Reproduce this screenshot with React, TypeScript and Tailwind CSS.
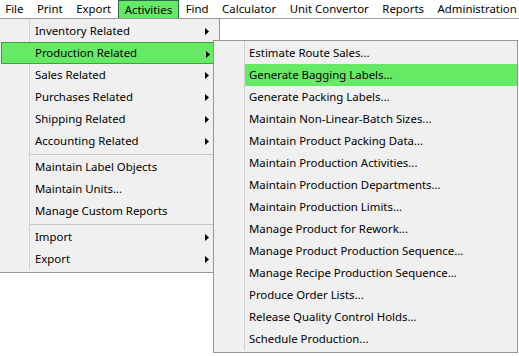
import React from "react";

const font = { fontFamily: '"Noto Sans", "Open Sans", sans-serif' };

function Arrow() {
  return (
    <svg width="4" height="7" viewBox="0 0 4 7" className="absolute left-[204px] top-[8px]">
      <path d="M0 0 L4 3.5 L0 7 Z" fill="#000" />
    </svg>
  );
}

type Item = { label: string; sub?: boolean; sep?: boolean; active?: boolean };

const mainItems: Item[] = [
  { label: "Inventory Related", sub: true },
  { label: "Production Related", sub: true, active: true },
  { label: "Sales Related", sub: true },
  { label: "Purchases Related", sub: true },
  { label: "Shipping Related", sub: true },
  { label: "Accounting Related", sub: true, sep: true },
  { label: "Maintain Label Objects" },
  { label: "Maintain Units..." },
  { label: "Manage Custom Reports", sep: true },
  { label: "Import", sub: true },
  { label: "Export", sub: true },
];

const subItems = [
  "Estimate Route Sales...",
  "Generate Bagging Labels...",
  "Generate Packing Labels...",
  "Maintain Non-Linear-Batch Sizes...",
  "Maintain Product Packing Data...",
  "Maintain Production Activities...",
  "Maintain Production Departments...",
  "Maintain Production Limits...",
  "Manage Product for Rework...",
  "Manage Product Production Sequence...",
  "Manage Recipe Production Sequence...",
  "Produce Order Lists...",
  "Release Quality Control Holds...",
  "Schedule Production...",
];

const bar = ["File", "Print", "Export", "Activities", "Find", "Calculator", "Unit Convertor", "Reports", "Administration"];

export default function App() {
  return (
    <div className="relative w-[519px] h-[356px] overflow-hidden bg-white text-[11.4px] text-black whitespace-nowrap" style={font}>
      <div className="flex h-[19px] border-b border-[#a0a0a0] bg-white">
        <div className="flex -ml-[1.5px]">
          {bar.map((b) => (
            <div
              key={b}
              className={
                b === "Activities"
                  ? "flex items-center h-[19px] px-[5.75px] bg-[#66ea66] border border-[#2f6b4a] leading-none"
                  : "flex items-center h-[18px] px-[6.75px] leading-none"
              }
            >
              {b}
            </div>
          ))}
        </div>
      </div>

      {/* main dropdown */}
      <div className="absolute left-0 top-[18px] w-[220px] bg-[#f0f0f0] border border-[#979797] border-l-0 pt-[1px] pb-[2px]">
        <div className="absolute left-[29px] top-0 bottom-[2px] w-px bg-[#d0d0d0]" />
        {mainItems.map((it) => (
          <React.Fragment key={it.label}>
            <div
              className={
                it.active
                  ? "relative flex items-center h-[22px] ml-[1px] mr-[2px] bg-[#66ea66] border border-[#3aa53a] pl-[33px]"
                  : "relative flex items-center h-[22px] ml-[1px] mr-[2px] pl-[34px]"
              }
            >
              {it.label}
              {it.sub && <Arrow />}
            </div>
            {it.sep && (
              <div className="relative h-[4px] flex items-center pl-[30px] pr-[2px]">
                <div className="h-px w-full bg-[#c8c8c8]" />
              </div>
            )}
          </React.Fragment>
        ))}
      </div>

      {/* submenu */}
      <div className="absolute left-[213px] top-[40px] w-[305px] bg-[#f0f0f0] border border-[#979797] pt-[1px] pb-[2px]">
        <div className="absolute left-[30px] top-0 bottom-[2px] w-px bg-[#d0d0d0]" />
        {subItems.map((s) => (
          <div
            key={s}
            className={
              s === "Generate Bagging Labels..."
                ? "relative flex items-center h-[22px] ml-[31px] pl-[4px] bg-[#66ea66]"
                : "relative flex items-center h-[22px] ml-[31px] pl-[4px]"
            }
          >
            {s}
          </div>
        ))}
      </div>
    </div>
  );
}
